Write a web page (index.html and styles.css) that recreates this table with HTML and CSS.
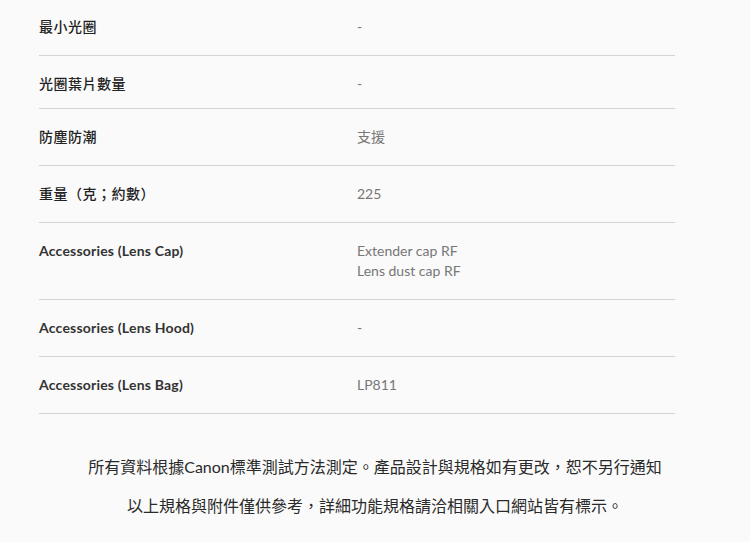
FILE: index.html
```html
<!DOCTYPE html>
<html lang="zh-Hant">
<head>
    <meta charset="UTF-8">
    <meta name="viewport" content="width=device-width, initial-scale=1.0">
    <link rel="stylesheet" href="styles.css">
</head>
<body>
    <div class="spec-wrap">
        <div class="spec-table">
            <div class="spec-row first">
                <div class="spec-name zh">最小光圈</div>
                <div class="spec-value">-</div>
            </div>
            <div class="spec-row short">
                <div class="spec-name zh">光圈葉片數量</div>
                <div class="spec-value">-</div>
            </div>
            <div class="spec-row">
                <div class="spec-name zh">防塵防潮</div>
                <div class="spec-value">支援</div>
            </div>
            <div class="spec-row">
                <div class="spec-name zh">重量（克；約數）</div>
                <div class="spec-value">225</div>
            </div>
            <div class="spec-row">
                <div class="spec-name">Accessories (Lens Cap)</div>
                <div class="spec-value">Extender cap RF<br>Lens dust cap RF</div>
            </div>
            <div class="spec-row">
                <div class="spec-name">Accessories (Lens Hood)</div>
                <div class="spec-value">-</div>
            </div>
            <div class="spec-row">
                <div class="spec-name">Accessories (Lens Bag)</div>
                <div class="spec-value">LP811</div>
            </div>
        </div>
    </div>

    <div class="spec-note">
        <p>所有資料根據Canon標準測試方法測定。產品設計與規格如有更改，恕不另行通知</p>
        <p>以上規格與附件僅供參考，詳細功能規格請洽相關入口網站皆有標示。</p>
    </div>
</body>
</html>
```

FILE: styles.css
```css
html, body {
    margin: 0;
    background: #fafafa;
    font-family: Lato, "Noto Sans CJK TC", sans-serif;
}

.spec-wrap {
    width: 636px;
    margin: 0 0 0 39px;
}

.spec-table {
    margin-top: -1px;
}

.spec-row {
    display: grid;
    grid-template-columns: 318px 1fr;
    padding: 18px 0;
    border-bottom: 1px solid #d4d4d4;
    line-height: 20px;
}

.spec-row.short {
    padding-bottom: 14px;
}

.spec-name {
    font-size: 14px;
    font-weight: bold;
    letter-spacing: 0.2px;
    color: #333;
}

.spec-name.zh {
    font-weight: 500;
    letter-spacing: 0.5px;
    color: #222;
}

.spec-value {
    font-size: 14px;
    color: #777;
}

.spec-note {
    padding-top: 33px;
    text-align: center;
    font-size: 16px;
    color: #2a2a2a;
}

.spec-note p {
    margin: 0;
    line-height: 39px;
}
```
